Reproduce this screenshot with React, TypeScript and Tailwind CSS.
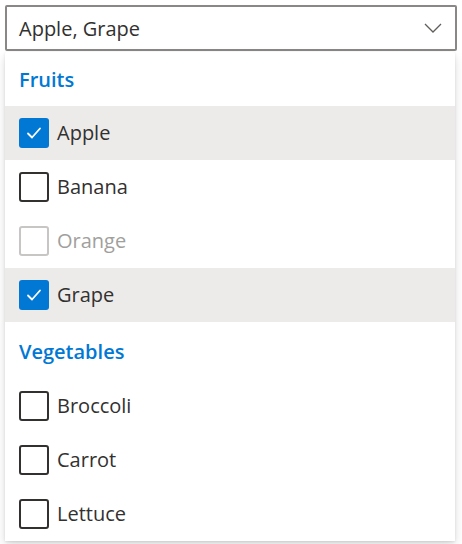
import { useState } from 'react';

type Item = { key: string; text: string; header?: boolean; disabled?: boolean };

const OPTIONS: Item[] = [
  { key: 'fruitsHeader', text: 'Fruits', header: true },
  { key: 'apple', text: 'Apple' },
  { key: 'banana', text: 'Banana' },
  { key: 'orange', text: 'Orange', disabled: true },
  { key: 'grape', text: 'Grape' },
  { key: 'vegetablesHeader', text: 'Vegetables', header: true },
  { key: 'broccoli', text: 'Broccoli' },
  { key: 'carrot', text: 'Carrot' },
  { key: 'lettuce', text: 'Lettuce' },
];

function Check({ checked, disabled }: { checked: boolean; disabled?: boolean }) {
  if (checked) {
    return (
      <span className="w-[30px] h-[30px] rounded-[3px] bg-[#0078d4] flex items-center justify-center shrink-0">
        <svg width="18" height="18" viewBox="0 0 18 18" fill="none">
          <path d="M3 9.5 L7 13.5 L15 4.5" stroke="white" strokeWidth="1.8" strokeLinecap="round" strokeLinejoin="round" />
        </svg>
      </span>
    );
  }
  return (
    <span
      className={
        'w-[30px] h-[30px] rounded-[3px] border-2 shrink-0 ' +
        (disabled ? 'border-[#c8c6c4]' : 'border-[#323130]')
      }
    />
  );
}

export default function App() {
  const [selected, setSelected] = useState<string[]>(['apple', 'grape']);

  const toggle = (k: string) =>
    setSelected(s => (s.includes(k) ? s.filter(x => x !== k) : [...s, k]));

  const title = OPTIONS.filter(o => selected.includes(o.key)).map(o => o.text).join(', ');

  return (
    <div className="w-[462px] h-[544px] bg-white pt-[5px] px-[5px] font-['Segoe_UI','Open_Sans',sans-serif] text-[#323130]">
      {/* Dropdown field */}
      <div className="w-[452px] h-[46px] border-2 border-[#8a8886] rounded-[2px] flex items-center pl-[12px] pr-[12px] justify-between">
        <span className="text-[20px] pt-[1px]">{title}</span>
        <svg width="18" height="10" viewBox="0 0 18 10" fill="none" className="mr-[1px]">
          <path d="M1 1 L9 9 L17 1" stroke="#605e5c" strokeWidth="1.3" />
        </svg>
      </div>

      {/* Callout */}
      <div className="mt-[1px] w-[450px] bg-white shadow-[0_5px_11px_rgba(0,0,0,0.13),0_1px_3px_rgba(0,0,0,0.11)] rounded-[2px]">
        {OPTIONS.map((o, i) =>
          o.header ? (
            <div
              key={o.key}
              className={
                'flex items-center px-[14px] text-[20px] font-semibold text-[#0078d4] ' +
                (i === 0 ? 'h-[54px] pt-[2px]' : 'h-[57px] pt-[3px]')
              }
            >
              {o.text}
            </div>
          ) : (
            <button
              key={o.key}
              disabled={o.disabled}
              onClick={() => toggle(o.key)}
              className={
                'w-full h-[54px] flex items-center gap-[8px] px-[14px] text-left ' +
                (selected.includes(o.key) ? 'bg-[#edebe9]' : 'bg-white')
              }
            >
              <Check checked={selected.includes(o.key)} disabled={o.disabled} />
              <span className={'text-[20px] ' + (o.disabled ? 'text-[#a19f9d]' : 'text-[#323130]')}>{o.text}</span>
            </button>
          )
        )}
      </div>
    </div>
  );
}
